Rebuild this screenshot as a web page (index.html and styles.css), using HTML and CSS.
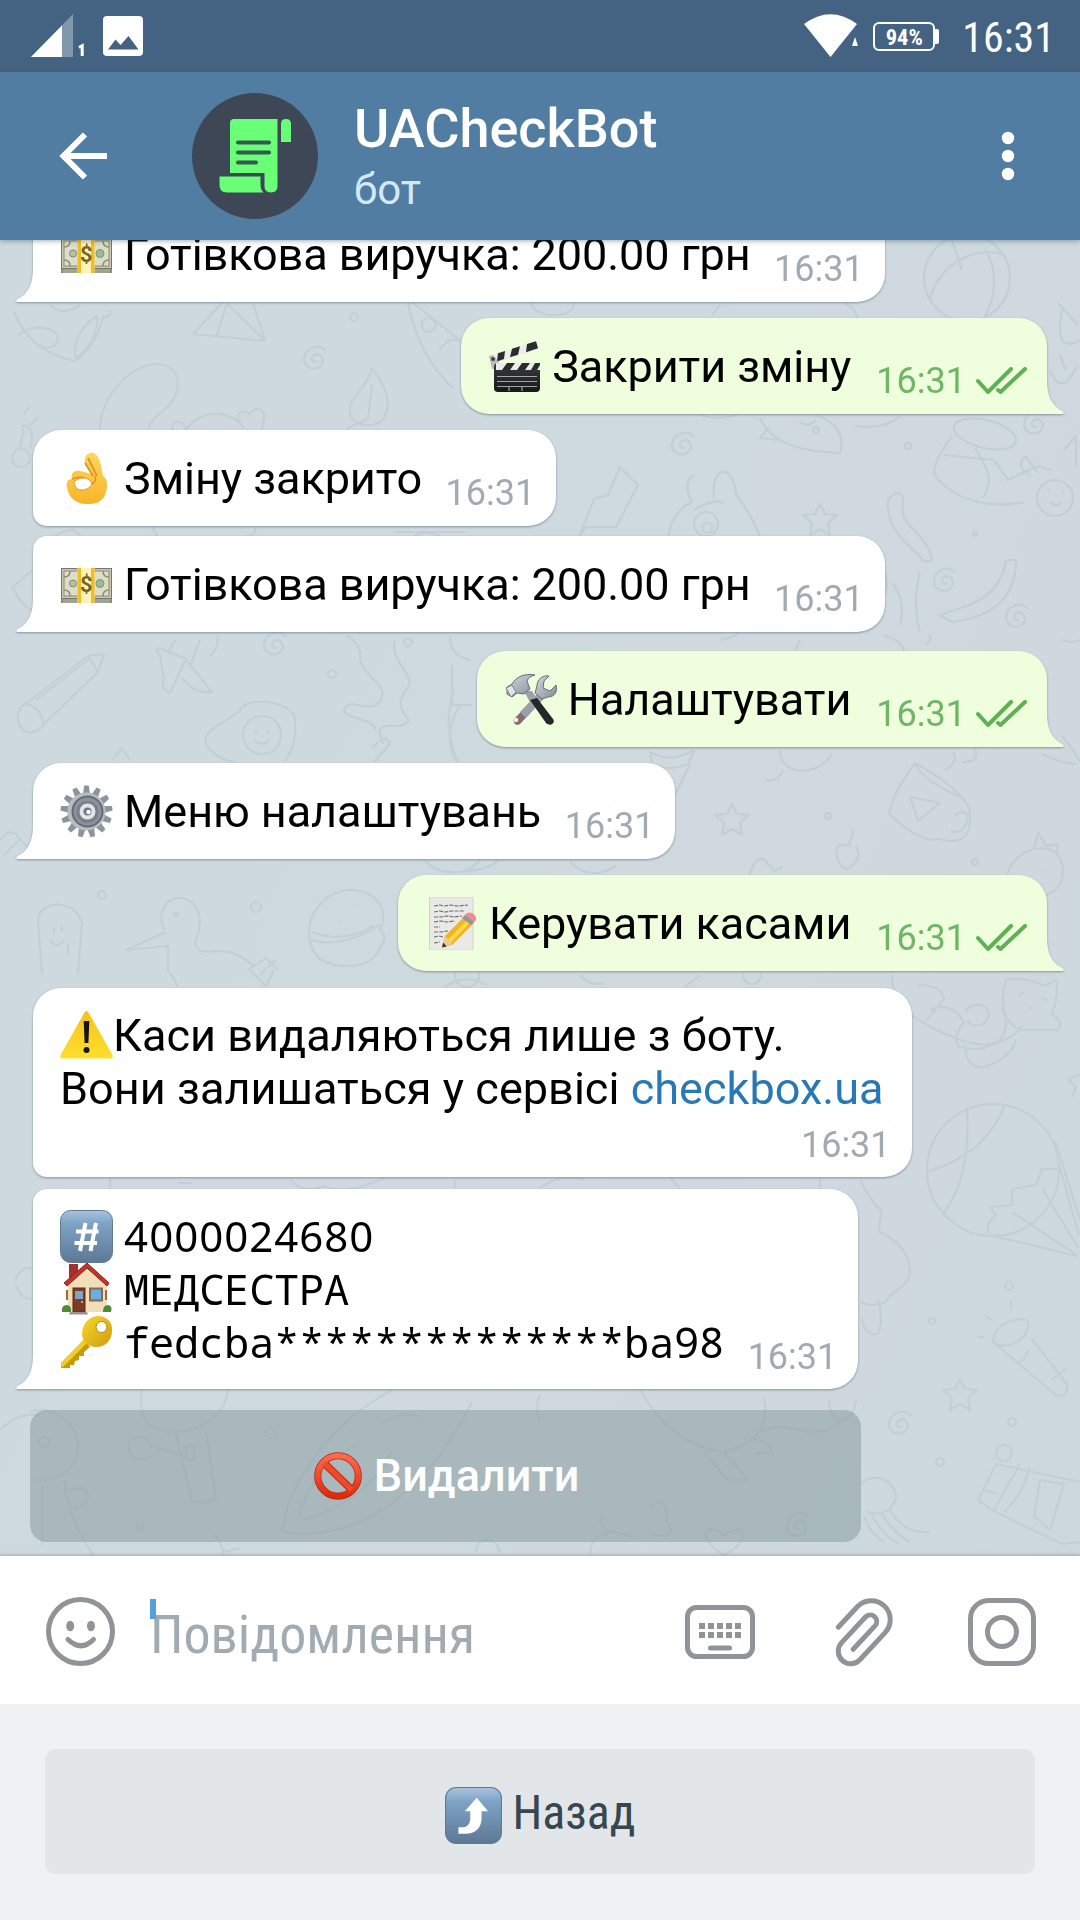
FILE: index.html
```html
<!DOCTYPE html>
<html lang="uk">
<head>
<meta charset="utf-8">
<title>UACheckBot</title>
<link rel="stylesheet" href="styles.css">
</head>
<body>
<svg class="defs" width="0" height="0" aria-hidden="true">
  <defs>
    <linearGradient id="g-key" x1="0" y1="0" x2="0" y2="1"><stop offset="0" stop-color="#a9c4dc"/><stop offset=".25" stop-color="#7ea3c6"/><stop offset="1" stop-color="#5d7894"/></linearGradient>
    <linearGradient id="g-warn" x1="0" y1="0" x2="0" y2="1"><stop offset="0" stop-color="#f5c21c"/><stop offset="1" stop-color="#ffdf2c"/></linearGradient>
    <linearGradient id="g-hand" x1="0" y1="0" x2="0" y2="1"><stop offset="0" stop-color="#ffd75a"/><stop offset="1" stop-color="#f8b42a"/></linearGradient>
    <linearGradient id="g-gold" x1="0" y1="0" x2="1" y2="1"><stop offset="0" stop-color="#f7d92b"/><stop offset="1" stop-color="#cf9a10"/></linearGradient>
    <linearGradient id="g-red" x1="0" y1="0" x2="0" y2="1"><stop offset="0" stop-color="#ff6a4d"/><stop offset="1" stop-color="#dd2a0c"/></linearGradient>
    <linearGradient id="g-steel" x1="0" y1="0" x2="1" y2="1"><stop offset="0" stop-color="#d5dae0"/><stop offset="1" stop-color="#848b94"/></linearGradient>
    <linearGradient id="g-black" x1="0" y1="0" x2="0" y2="1"><stop offset="0" stop-color="#3a3c42"/><stop offset="1" stop-color="#17181b"/></linearGradient>
    <symbol id="e-money" viewBox="0 0 53 53">
      <rect x="1" y="12" width="51" height="33" fill="#8f8c7c"/>
      <rect x="1.500" y="10.500" width="50" height="30" fill="#c9c8b0" stroke="#77766a"/>
      <rect x="4" y="13" width="45" height="25" fill="#deddc8" stroke="#8b8a78"/>
      <path d="M4 19q6 0 6-6M4 32q6 0 6 6M49 19q-6 0-6-6M49 32q-6 0-6 6" fill="none" stroke="#8b8a78" stroke-width="1.500"/>
      <circle cx="13" cy="25.500" r="3.500" fill="#bdbda6" stroke="#7b8a72"/><circle cx="40" cy="25.500" r="4" fill="#9dba94" stroke="#6f9a76"/>
      <path d="M3 42h47M3 44h47" stroke="#bab7a5"/>
      <rect x="17.500" y="10" width="17" height="35" fill="#fff2b8"/>
      <path d="M17.500 10h3.500v35h-3.500zM31 10h3.500v35H31z" fill="#eebd2a"/>
      <text x="26.200" y="34" text-anchor="middle" class="dollar">$</text>
    </symbol>
    <symbol id="e-clap" viewBox="0 0 53 53">
      <path d="M1 16 49 1l2 8L4 24z" fill="#ececec"/>
      <path d="M10 13.200 17 11l-1 8-7 2.500zM24 8.800l8-2.500-2 8.500-8 2.500zM39 4.100l9-2.800 2 7-12 4z" fill="#2a2b2e"/>
      <path d="M1 16l4-1 11 14H4z" fill="#b9bbc0"/><circle cx="5" cy="19" r="2" fill="#444"/>
      <rect x="6" y="23" width="46" height="29" rx="4" fill="url(#g-black)"/>
      <path d="M8 23h44v7H8z" fill="#ececec"/>
      <path d="M19 23h8l-5 7h-8zM34 23h8l-5 7h-8zM47 23h5v2l-3 5h-6z" fill="#2a2b2e"/>
      <path d="M9 36.500h40M9 41.500h40M9 46.500h40M21 47v4M34 47v4" stroke="#a3a4a6" stroke-width="1.200"/>
    </symbol>
    <symbol id="e-ok" viewBox="0 0 53 53">
      <path d="M30 1c-5 2-6 6-5 10l6 11c-5-1-10-4-15-3-4 1-5 4-4 8-5 0-6 4-5 9 2 10 9 16 20 16 11 1 18-5 19-13 2-4 1-9 0-12l-3-3C41 14 40 4 34 1q-2-1-4 0z" fill="url(#g-hand)"/>
      <path d="M28 6l9 18M25 11l8 13" fill="none" stroke="#dd9420" stroke-width="1.800"/>
      <path d="M14 29c4-1 6-4 10-3 4 0 7 3 8 6-2 4-6 6-11 6-4 0-7-4-7-9z" fill="#fff" stroke="#e2991e"/>
      <path d="M12 27q8-3 12-1M32 32q5-3 3-8" fill="none" stroke="#dd9420" stroke-width="1.400"/>
    </symbol>
    <symbol id="e-tools" viewBox="0 0 53 53">
      <path d="M36 19l6 4-25 27c-3 4-9 1-7-4z" fill="#8b6a70"/><path d="M36 18l6 5-20 22-6-6z" fill="#98a0a9"/><circle cx="12" cy="47" r="2.300" fill="#eff5df"/>
      <path d="M45 3c-6-1-12 3-12 10l-2 7 7 6 6-2c7 0 10-6 8-12l-6 6-7-3 1-7z" fill="url(#g-steel)" stroke="#656d77"/>
      <path d="M20 18l8 0 8 12-7 5z" fill="#9ba2ac"/>
      <path d="M26 27l7-2 16 21c3 4-3 8-7 4z" fill="#25272b"/>
      <path d="M3 14 8 11C12 4 20 0 31 2c-4 1-7 3-8 6l3 8-6 5-7-1-5 4-5-3z" fill="url(#g-steel)" stroke="#656d77"/>
      <path d="M2 15l6-3 4 7-5 5z" fill="#dfe3e8" stroke="#7d848e"/>
    </symbol>
    <symbol id="e-gear" viewBox="0 0 53 53">
      <g fill="#8d949c">
        <path id="tooth" d="M23 9l1.200-8.500h4.600L30 9z"/>
        <use href="#tooth" transform="rotate(27.700 26.500 26.500)"/><use href="#tooth" transform="rotate(55.400 26.500 26.500)"/><use href="#tooth" transform="rotate(83 26.500 26.500)"/><use href="#tooth" transform="rotate(110.800 26.500 26.500)"/><use href="#tooth" transform="rotate(138.500 26.500 26.500)"/><use href="#tooth" transform="rotate(166 26.500 26.500)"/><use href="#tooth" transform="rotate(194 26.500 26.500)"/><use href="#tooth" transform="rotate(221.500 26.500 26.500)"/><use href="#tooth" transform="rotate(249 26.500 26.500)"/><use href="#tooth" transform="rotate(277 26.500 26.500)"/><use href="#tooth" transform="rotate(304.600 26.500 26.500)"/><use href="#tooth" transform="rotate(332.300 26.500 26.500)"/>
      </g>
      <circle cx="26.500" cy="26.500" r="19" fill="#b6bdc5"/>
      <circle cx="27.500" cy="26.500" r="15" fill="#8b929a" stroke="#646b74" stroke-width="2"/>
      <circle cx="27.500" cy="27" r="11" fill="#7a7f87"/>
      <circle cx="27.500" cy="26.500" r="8" fill="#e2e5e9"/>
      <circle cx="27.500" cy="26.500" r="4" fill="#70777f"/><circle cx="28.500" cy="27" r="2.300" fill="#fff"/>
    </symbol>
    <symbol id="e-memo" viewBox="0 0 53 53">
      <path d="M4.500 0H48v53H4.500z" fill="#e9e9e6" stroke="#d2d2ce"/>
      <path d="M9 9l6-1 4 1 6-1 8 1 10-1M9 15l5-1 6 1 7-1 12 0M9 20l6 0 8-1 6 1 8-1M9 25l7-1 5 1 9-1M9 30h6M9 35l6 0 8-1M9 40l5-1 4 1M9 46l6-1" fill="none" stroke="#6e7073" stroke-width="1.200" stroke-dasharray="4 1.200"/>
      <path d="M17 50l3-11 20-20 9 7-22 22z" fill="#f3b51d"/>
      <path d="M23 43l20-21 3 2.500-20 21z" fill="#ffd84e"/>
      <path d="M17 50l3-11 7 8z" fill="#ecca96"/><path d="M17 50.500l1.200-5 3.500 4z" fill="#333"/>
      <path d="M37 21l4-4 9 7-4 4z" fill="#8f979e"/><path d="M40 18l2-2c4-2 10 2 9 7l-2 2z" fill="#f08b91"/>
    </symbol>
    <symbol id="e-warn" viewBox="0 0 53 53">
      <path d="M24.500 3.500q2-3 4 0l24 42.500q1 3-2 3.500h-48q-3-.5-2-3.500z" fill="url(#g-warn)"/>
      <path d="M23.700 12h5.600l-.9 22h-3.800z" fill="#15130b"/><circle cx="26.500" cy="41" r="3" fill="#15130b"/>
    </symbol>
    <symbol id="e-hash" viewBox="0 0 53 53">
      <rect x=".5" y=".5" width="52" height="52" rx="10" fill="url(#g-key)" stroke="#607a94"/>
      <path d="M25.500 13l-5.500 28M36 13l-5.500 28M16 21.500h22.500M14.500 33h22.500" stroke="#fff" stroke-width="4" fill="none"/>
    </symbol>
    <symbol id="e-house" viewBox="0 0 53 53">
      <path d="M9 1h9v16H9z" fill="#a4322c"/>
      <path d="M8 21 27 3l20 18v28H8z" fill="#f0dfb9"/>
      <path d="M4 20 27 0l22 20-2 3L27 5 7 23z" fill="#c2332c" stroke="#8e2621"/>
      <rect x="13" y="25" width="12" height="24" fill="#7c3b25" stroke="#5d2a18"/><rect x="15" y="28" width="8" height="8" fill="#7aa7c8"/><circle cx="22" cy="39" r="1" fill="#f3cf65"/>
      <rect x="30" y="25.500" width="12" height="12" fill="#67aee6" stroke="#8c6a45" stroke-width="2"/>
      <path d="M10 49h17l1 2.500H9z" fill="#9a938b"/>
      <path d="M2 49q-1-7 5-7 5 1 4 7zM43 49q0-7 5-7 5 1 3 7z" fill="#4f8a35"/>
      <path d="M7 27v10M46 27v10" stroke="#a5683d" stroke-width="2"/>
    </symbol>
    <symbol id="e-key" viewBox="0 0 53 53">
      <path d="M24 24l6 7-6 5 0 4-5 0 0 4-4 1-1 4-4 0v3H1v-5z" fill="#c8980f"/>
      <path d="M24 23l3 4L3 51H1v-4z" fill="#efcd2b"/>
      <path d="M37 0C47 0 53 6 52 16c-1 9-7 15-16 15-8 0-14-6-14-13C22 9 28 1 37 0z" fill="url(#g-gold)"/>
      <circle cx="41.500" cy="11" r="5.500" fill="#fff" stroke="#b8890c"/>
    </symbol>
    <symbol id="e-no" viewBox="0 0 53 53">
      <path d="M12 13l29 28" stroke="#c1260b" stroke-width="8"/>
      <circle cx="26.500" cy="26.500" r="21.500" fill="none" stroke="#b9230b" stroke-width="7.500"/>
      <circle cx="26.500" cy="26.500" r="21.500" fill="none" stroke="url(#g-red)" stroke-width="6"/>
      <path d="M12 13l29 28" stroke="#ee4a2a" stroke-width="6"/>
    </symbol>
    <symbol id="e-up" viewBox="0 0 53 53">
      <rect x=".5" y=".5" width="52" height="52" rx="10" fill="url(#g-key)" stroke="#607a94"/>
      <path d="M12.500 37.500h3c6 0 8-4 8-9v-6h-5L29.500 10 40 22.500h-6V29c0 9-6 14.500-15 14.500h-6.500z" fill="#fff"/>
    </symbol>
    <symbol id="tail" viewBox="0 0 18 34"><path d="M18 0h-1C17 17 12 26 1 31.500Q-1 34 2 34h16z"/></symbol>
    <symbol id="checks" viewBox="0 0 51 27"><path d="M2 14l10 11L35 2M22 23l2.500 2L49 2" fill="none" stroke="#5fb254" stroke-width="4" stroke-linecap="round" stroke-linejoin="round"/></symbol>
    <path id="star" d="M0-16l5 10 12 1-9 8 2 12-10-6-10 6 2-12-9-8 12-1z"/>
    <path id="spiral" d="M2 1c-3 3-7-1-4-5 5-5 12 1 9 8-5 8-18 5-18-5 1-12 15-16 22-8"/>
  </defs>
</svg>

<div class="phone">
  <div class="status">
    <svg class="status-left" width="150" height="72" viewBox="0 0 150 72">
      <path d="M73 14v43H31z" fill="#8197ac"/><path d="M62 25.500V57H31z" fill="#fff"/>
      <path d="M79 47.500l3.200-1.800V56" fill="none" stroke="#fff" stroke-width="3"/>
      <rect x="103" y="16" width="40" height="40" rx="4" fill="#fff"/>
      <path d="M108 49.500l7.500-10 5 5.500 8-9 10 13.500z" fill="#446282"/>
    </svg>
    <div class="status-right">
      <svg width="56" height="72" viewBox="0 0 56 72"><path d="M0 24Q26.500 4.500 53 24L26.500 57z" fill="#fff"/><path d="M51 37l3 9h-6z" fill="#fff"/></svg>
      <div class="battery">94%</div>
      <div class="clock">16:31</div>
    </div>
  </div>

  <header class="header">
    <svg class="back" width="50" height="48" viewBox="0 0 50 48"><path d="M48 24H5M26 2.500 4.500 24 26 45.500" fill="none" stroke="#fff" stroke-width="6"/></svg>
    <svg class="avatar" width="126" height="126" viewBox="0 0 126 126">
      <circle cx="63" cy="63" r="63" fill="#3e4756"/>
      <path d="M42 26h43.500v67q0 6.500-6.500 6.500t-6.500-6.500V80H38V30q0-4 4-4z" fill="#69ff76"/>
      <path d="M89 31q0-5 5-5t5 5v18H89zM27.500 83.500h41V91q0 6 3 8.500H35q-7.500 0-7.500-7.500z" fill="#69ff76"/>
      <path d="M46 49.500h31M46 59.500h31M46 69.500h18" stroke="#35584f" stroke-width="4" stroke-linecap="round"/>
    </svg>
    <div class="peer">
      <div class="peer-name">UACheckBot</div>
      <div class="peer-status">бот</div>
    </div>
    <svg class="more" width="14" height="52" viewBox="0 0 14 52"><g fill="#fff"><circle cx="7" cy="8" r="6.200"/><circle cx="7" cy="26" r="6.200"/><circle cx="7" cy="44" r="6.200"/></g></svg>
  </header>

  <main class="chat">
    <svg class="wallpaper" viewBox="0 240 1080 1316" aria-hidden="true">
      <g>
        <path d="M14 312Q30 352 75 361 98 345 103 315M75 358c-2-18 8-34 22-42 2 16-8 34-22 42M18 335c15-12 40-8 40 4-2 10-14 10-18 6M50 305q12 12 30 0M103 318q10-2 6-8"/>
        <path d="M193 334l30-32M193 334l72 7-38-38-10 32M265 341l-12-38"/>
        <use href="#spiral" x="315" y="360"/><circle cx="354" cy="317" r="4"/>
        <path d="M408 303c6 30 20 62 45 85M412 302l50 40M428 318a7 7 0 1 0 1 0M440 350q6-12 20-10"/>
        <path d="M100 430c0-32 28-65 58-66 25 2 26 30 6 46-10 8-14 12-16 18"/>
        <path d="M172 430c0-12 12-10 14 0 12-20 44-22 58-2M240 422c-6-8 2-14 10-8 4-8 16-6 14 4l-2 12"/>
        <path d="M372 368c10 14 22 32 12 50-10 12-30 8-34-4-4-16 16-22 22-46M372 385l-4 34-22 10"/>
        <path d="M20 450c0-14 6-14 2-24 10-2 12 10 8 22M30 425l8-8M24 414l6-8"/><circle cx="21" cy="458" r="9"/>
        <path d="M10 590l22-20M12 585q8 20 20 25M55 536q20-12 25 0M152 527q10 14 0 18M395 532h70M410 540q10-12 30-4M245 536q12 0 10-8"/>
        <circle cx="967" cy="278" r="43"/><path d="M930 300c10-40 50-55 75-45M985 250c14 20 10 50 0 66M952 240l10 30"/>
        <path d="M1058 303l20 22M1062 310q-4 20 0 30 8 8 18 0M1050 370q8 20 18 10l10-14M1060 355l6 15"/>
        <path d="M532 303c0 16 44 16 42 0M720 305l-8 10M845 303q20 12 8 30"/>
        <path d="M698 414q20 8 40 0M760 418c10 24 40 34 80 35 6-20-8-34-26-38M768 428l-8 10 18 2M800 422q8 6 16-2"/><circle cx="816" cy="430" r="3"/>
        <use href="#spiral" x="683" y="446"/><circle cx="908" cy="446" r="3"/>
        <path d="M855 426q30 4 45-10M620 467l18 18-22 42-30 0-6 8 14-36 14-4z"/>
        <path d="M668 540c2-20 10-32 24-38-8-14-4-26 2-26M714 498c-4-34 20-34 22-4 10 14 20 30 24 44M694 510q24-14 30-6"/><circle cx="706" cy="524" r="12"/><circle cx="707" cy="528" r="5"/>
        <use href="#star" x="820" y="520"/><circle cx="975" cy="534" r="2"/>
        <path d="M888 500c10-14 18-6 14 10 2 18 26 26 30 50q-10 4-12-4c-18-16-34-30-32-56"/>
        <path d="M940 615c30-10 60-16 66-55h10c0 34-18 56-64 62zM880 600c10-10 10-28-4-36M920 632q-8-30 0-60M900 625q6-26-8-42"/>
        <use href="#spiral" x="1017" y="618"/><use href="#spiral" x="945" y="582"/><use href="#spiral" x="1035" y="425"/>
        <ellipse cx="985" cy="434" rx="32" ry="14" transform="rotate(14 985 434)"/><path d="M952 436c-10 14-18 26-18 38 16 24 54 36 90 28M944 455l50 5 14 20 30-14 14 4M975 448c12 20 20 30 8 50"/><circle cx="1055" cy="498" r="18"/><path d="M1030 475c-10-4-12-16-4-18l12 16M1064 450l12-14v30M1048 490h2M1062 492h2M1050 502q6 6 12 0"/>
      </g>
      <g>
        <path d="M20 708L88 656l16-2-6 18-60 58c-12 8-26-6-18-22zM88 656l10 16M26 704q16 4 18 22M36 700l54-42"/>
        <path d="M160 655q-8-8 2-6l24 10-16 34q-10-4-6-14zM186 660l26 32q-18 2-30-14M176 640q-8 8-6 14M200 640l-10 26M218 636q0 14-8 20"/>
        <use href="#spiral" x="275" y="646"/><circle cx="332" cy="674" r="4"/><circle cx="408" cy="642" r="4"/>
        <path d="M206 745c-4-14 14-20 34-34 2-14 44-12 54 4 4 18-2 40-10 46M206 745q10 14 30 18"/><circle cx="262" cy="735" r="19"/><path d="M256 730v3M268 730v3M254 740q8 8 16 0"/>
        <path d="M346 636q16 6 14 24c6 20 30 24 20 42-12 12-32-6-36 8 2 10 26 6 32 20M395 640c-6 20 18 32 14 46-8 10-14 20 0 34-6 12-24 0-30 10l4 14M372 748q14-16 18-4l-16 18"/>
        <path d="M450 636c0 14 8 22 20 24M452 665v40h20M460 705q-18 30-4 56M454 690q-12 36 4 72"/>
        <path d="M112 760l10-12 8 12M0 840q12-16 20 0l14 12M4 855l14-14"/>
        <path d="M38 920c2-22 40-20 44 4l-4 50M38 920l4 54M54 928v6M62 926v6M50 940q6 10 14 0M68 944v10"/><circle cx="102" cy="895" r="4"/><circle cx="256" cy="907" r="5"/>
        <path d="M164 930c-8-20 4-34 18-32 18 4 20 20 16 36-4 10-4 16 8 18 30-4 40 8 48 14M166 932l-40 18 42-4v26M248 970l18-12 12 12M260 975l16-16"/><circle cx="176" cy="914" r="2"/>
        <path d="M310 940c-6-26 18-52 44-50 28 4 34 24 26 40q8 8 2 14c-4 12-14 22-34 22-24 0-36-10-38-26 20 6 50 0 70-16M312 932q30 12 62-6"/><path d="M325 908h1M340 922h1M355 905h1"/>
        <path d="M425 860q10 14 35 12 30-2 38-12M570 862q20 20 46 4M480 860q-10 10-18 12"/>
        <path d="M650 752q20 12 44-2l-6 14q-18 8-36 0zM654 770l10 25 12-2 14-28M780 750c0 28 40 26 52 4M765 780q14 2 18-10M720 640q20-4 16-8"/>
        <path d="M800 640l-8 16M884 636q20 4 20 18M925 645q10-8 2-10M1062 736c10 10 20 30 24 34M1042 754q20 10 34 10M1062 640q10 4 18 0"/>
        <use href="#star" x="732" y="820"/><circle cx="828" cy="816" r="3"/><circle cx="975" cy="862" r="3"/>
        <path d="M915 763q38 20 54 44c4 24-2 34-18 34l-14-2c-10 4-34-10-48-26 4-20 18-38 26-50M915 763q6 18 50 36M955 815q14-8 12 6-4 14-16 10M910 797l30 6-22 18zM945 770q14-8 8-18M962 762q20 0 12-14"/>
        <path d="M1008 872c-6 14 6 22 22 26 26 0 36-16 32-34-4-24-44-20-54 8M1034 848l4-16 8 14 12-2-2 12M1020 870h1M1032 882h1M1045 870h1M1040 892h1"/>
        <path d="M838 860q-6-20 10-14 6-12 4-16M838 860q6 14 14 6 10-8 4-20M750 875q4-18 14-16l10 12 8-4"/>
      </g>
      <g>
        <path d="M170 972l8 15M250 970l16 16 8-16M445 987q20-14 42-2M580 975q10 12 24 8M700 975l-15 12"/><circle cx="467" cy="975" r="12"/><circle cx="752" cy="975" r="9"/>
        <path d="M892 975c0 20 10 28 22 42 20 12 44 26 72 28 16-4 28-6 36-20M918 985q24 0 26 14l-18 22M930 1010q20-10 34 12-12 16-6 24 20 8 40-4 14-16 4-34M965 1012c10-12 24-8 24 4-4 12-18 12-22 4M966 1045c-2 12 4 24 18 22 14-4 30-14 32-28"/>
        <path d="M1006 980c-8 24 0 46 16 50l36 0c6-8-2-12-6-16 4-10 6-22 4-34l-12 6q-20-10-38-6M1018 996l6-4M1042 998l6 2M1028 1008h4"/>
        <circle cx="993" cy="1170" r="66"/><path d="M967 1110q4 70-25 105M1005 1105q-20 50-76 66M990 1235q-6-12 6-20l-6-8 22-2v-16l24-4 6-16h16M993 1236l84 20M1055 1140l25 80M1012 1212l66 44M1042 1188l36 60M1059 1165l20 70"/>
        <path d="M860 1180q10 20 22 32-4 12-2 20 30 14 30 42c-6 18-20 16-24 28-8 4-16 4-26 0M862 1318q2 18 16 16 6-12 0-34"/>
        <path d="M993 1342c0-16 20-26 34-22 6 14-16 34-34 22zM993 1342l64 54q12 0 10-12l-36-46M1028 1350q-4 14-12 12M1052 1380l14-12M1011 1300v10M985 1315l6 5M978 1337h6"/>
        <circle cx="1009" cy="1286" r="4"/><circle cx="932" cy="1321" r="3"/><use href="#star" x="960" y="1395"/><path d="M1080 1075l-12 4 8 8-4 10"/>
        <path d="M15 1282q4-16 18-14M16 1285q4 14 16 14M110 1177v12M178 1183h14M290 1180q14 14 34 6 22 10 60-8M455 1180v8M540 1188q20-16 45-8M670 1177l10 12M820 1177v12"/>
        <path d="M0 1430q20-20 40-14M30 1412c20-8 48 10 48 34 0 22-18 36-42 34M42 1485v60M64 1480q4 40 30 76M70 1490q18-6 18 8-4 12-14 10"/><circle cx="44" cy="1442" r="5"/>
        <path d="M142 1390c-4 30 6 42 34 42 30-2 50-20 52-42M130 1440c10-8 20 0 20 6l28 8M130 1440c-6 16 10 26 20 16M176 1434l16 66q12 6 24-2l-10-66M186 1446h8v14h-8z"/><circle cx="271" cy="1433" r="5"/><circle cx="140" cy="1527" r="3"/>
        <path d="M282 1532c6-50 50-110 110-142M282 1532c70 10 140-30 190-130M298 1518c10-36 40-70 60-72M392 1450c-10 30-50 60-90 70M380 1425q20-16 40-8"/>
        <path d="M640 1390c20 36 50 58 84 62l24 28-20 0-24-28M724 1452c40-10 44-34 40-54M750 1438q22 4 22 14l-18 2M760 1432c14-8 30-4 40-2 20 6 30 0 44-12M829 1400c0 24 24 28 27 0"/>
        <use href="#spiral" x="900" y="1425"/><circle cx="1004" cy="1453" r="8"/><circle cx="940" cy="1462" r="4"/><circle cx="1012" cy="1422" r="4"/>
        <path d="M860 1485c14-16 38-2 36 14l-6 10q-14 8-24 2M890 1510q14 24 40 22M880 1512q14 22 30 30M872 1515q10 20 26 28M864 1516q6 18 20 26"/>
        <path d="M978 1500l18-36 84 18M978 1500l14 10 70 34 18-2M1020 1464l-26 46M1030 1466q-8 30-26 46M1040 1480l-6 36 16 14 14-46zM985 1490l12 4"/>
        <path d="M724 1555c-30-18-18-34 0-20 20-14 30 4 0 20M590 1555q0-20 20-24l24 6M602 1516c-8 10 10 10 4 20M650 1510c8-16 20-4 16 10 10 10 4 20-14 14"/><use href="#spiral" x="798" y="1527"/>
        <path d="M215 1535q10 14 8 20M225 1552l14-4M476 1552c0-16 20-16 24 0M540 1395q-6 14 0 24"/>
      </g>
    </svg>

    <div class="msg in last">
      <svg class="tail"><use href="#tail"/></svg>
      <div class="text"><svg class="emoji"><use href="#e-money"/></svg> Готівкова виручка: 200.00 грн</div>
      <div class="time">16:31</div>
    </div>

    <div class="msg out">
      <svg class="tail"><use href="#tail"/></svg>
      <div class="text"><svg class="emoji"><use href="#e-clap"/></svg> Закрити зміну</div>
      <div class="time">16:31<svg class="checks"><use href="#checks"/></svg></div>
    </div>

    <div class="msg in first">
      <div class="text"><svg class="emoji"><use href="#e-ok"/></svg> Зміну закрито</div>
      <div class="time">16:31</div>
    </div>
    <div class="msg in last joined">
      <svg class="tail"><use href="#tail"/></svg>
      <div class="text"><svg class="emoji"><use href="#e-money"/></svg> Готівкова виручка: 200.00 грн</div>
      <div class="time">16:31</div>
    </div>

    <div class="msg out spaced">
      <svg class="tail"><use href="#tail"/></svg>
      <div class="text"><svg class="emoji"><use href="#e-tools"/></svg> Налаштувати</div>
      <div class="time">16:31<svg class="checks"><use href="#checks"/></svg></div>
    </div>

    <div class="msg in">
      <svg class="tail"><use href="#tail"/></svg>
      <div class="text"><svg class="emoji"><use href="#e-gear"/></svg> Меню налаштувань</div>
      <div class="time">16:31</div>
    </div>

    <div class="msg out">
      <svg class="tail"><use href="#tail"/></svg>
      <div class="text"><svg class="emoji"><use href="#e-memo"/></svg> Керувати касами</div>
      <div class="time">16:31<svg class="checks"><use href="#checks"/></svg></div>
    </div>

    <div class="msg in first stacked">
      <div class="text"><svg class="emoji"><use href="#e-warn"/></svg>Каси видаляються лише з боту.<br>Вони залишаться у сервісі <a class="link">checkbox.ua</a></div>
      <div class="time">16:31</div>
    </div>
    <div class="msg in last joined card">
      <svg class="tail"><use href="#tail"/></svg>
      <div class="text"><svg class="emoji"><use href="#e-hash"/></svg> <span class="digits">4000024680</span><br><svg class="emoji"><use href="#e-house"/></svg> <span class="mono">МЕДСЕСТРА</span><br><svg class="emoji"><use href="#e-key"/></svg> <span class="mono">fedcba**************ba98</span></div>
      <div class="time">16:31</div>
    </div>

    <div class="inline-button"><svg class="emoji"><use href="#e-no"/></svg> Видалити</div>
  </main>

  <div class="composer">
    <svg class="smile" width="70" height="70" viewBox="0 0 70 70">
      <circle cx="34.500" cy="34.500" r="32" fill="none" stroke="#8e9498" stroke-width="5"/>
      <ellipse cx="24.200" cy="29" rx="4" ry="5.200" fill="#8e9498"/><ellipse cx="45" cy="29" rx="4" ry="5.200" fill="#8e9498"/>
      <path d="M22 42.500q13 12.500 25.500 0" fill="none" stroke="#8e9498" stroke-width="5" stroke-linecap="round"/>
    </svg>
    <div class="input"><span class="caret"></span>Повідомлення</div>
    <svg width="70" height="56" viewBox="0 0 70 56">
      <rect x="2.500" y="3.500" width="65" height="49" rx="9" fill="none" stroke="#8e9498" stroke-width="5"/>
      <path d="M14 22h44M14 31h44" stroke="#8e9498" stroke-width="6" stroke-dasharray="6 3"/>
      <path d="M25.500 44h19" stroke="#8e9498" stroke-width="5" stroke-linecap="round"/>
    </svg>
    <svg class="clip" width="60" height="70" viewBox="0 0 60 70">
      <path transform="translate(36.500 22) rotate(43)" d="M-18 28V0a19 19 0 0 1 38 0V37a12.500 12.500 0 0 1-25 0V2a6.500 6.500 0 0 1 13 0V34" fill="none" stroke="#8e9498" stroke-width="5" stroke-linecap="round"/>
    </svg>
    <svg width="70" height="70" viewBox="0 0 70 70">
      <rect x="3.500" y="3.500" width="63" height="63" rx="18" fill="none" stroke="#8e9498" stroke-width="5"/>
      <circle cx="35" cy="35" r="14.500" fill="none" stroke="#8e9498" stroke-width="5"/>
    </svg>
  </div>

  <div class="keyboard">
    <div class="key"><svg class="emoji"><use href="#e-up"/></svg> Назад</div>
  </div>
</div>
</body>
</html>
```
FILE: styles.css
```css
* { box-sizing: border-box; }

body {
  margin: 0;
  font-family: Roboto, sans-serif;
  background: #eff1f5;
}

.defs { position: absolute; }

.dollar { font: 700 22px Roboto, sans-serif; fill: #7a6420; }

.phone {
  width: 1080px;
  height: 1920px;
  display: flex;
  flex-direction: column;
  overflow: hidden;
}

/* Status bar */
.status {
  height: 72px;
  flex: none;
  display: flex;
  justify-content: space-between;
  background: #446282;
  color: #fff;
  font-family: "Roboto Condensed", Roboto, sans-serif;
}

.status-right {
  display: flex;
  align-items: center;
  padding-right: 25px;
}

.status-right svg { margin-right: 13px; }

.battery {
  position: relative;
  width: 62px;
  height: 29px;
  border: 2px solid #fff;
  border-radius: 6px;
  font-size: 22.5px;
  font-weight: 700;
  line-height: 27px;
  text-align: center;
}

.battery::after {
  content: "";
  position: absolute;
  left: 60px;
  top: 5px;
  width: 4px;
  height: 15px;
  border-radius: 0 2px 2px 0;
  background: #fff;
}

.clock {
  margin-left: 27px;
  padding-top: 3px;
  font-size: 42px;
  line-height: 48px;
}

/* Header */
.header {
  position: relative;
  z-index: 2;
  height: 168px;
  flex: none;
  display: flex;
  align-items: center;
  padding: 0 65px 0 59px;
  background: #517da2;
  color: #fff;
  box-shadow: 0 1px 5px rgba(60, 70, 80, .45);
}

.avatar { margin-left: 83px; }

.peer { flex: 1; margin-left: 36px; }

.peer-name {
  font-size: 54px;
  font-weight: 500;
  line-height: 62px;
}

.peer-status {
  margin-top: 5px;
  font-size: 42px;
  line-height: 50px;
  color: #d3e8fa;
}

/* Conversation */
.chat {
  position: relative;
  height: 1316px;
  flex: none;
  display: flex;
  flex-direction: column;
  justify-content: flex-end;
  padding: 0 33px 14px;
  overflow: hidden;
  background: linear-gradient(115deg, #ced9df, #cfd9df 60%, #cdd8dd);
}

.wallpaper {
  position: absolute;
  left: 0;
  top: 0;
  width: 1080px;
  height: 1316px;
  fill: none;
  stroke: #c3cfd6;
  stroke-width: 2.2;
  stroke-linejoin: round;
}

.msg {
  position: relative;
  flex: none;
  display: flex;
  align-items: flex-end;
  align-self: flex-start;
  gap: 23.5px;
  margin-top: 16px;
  padding: 22px 21px 21px 27px;
  border-radius: 28px;
  background: #fff;
  color: #000;
  fill: #fff;
  filter: drop-shadow(0 1px 1px rgba(90, 112, 125, .65));
}

.in { border-bottom-left-radius: 0; }
.in.first { border-bottom-left-radius: 14px; }
.in.joined { margin-top: 10px; border-top-left-radius: 14px; }

.out {
  align-self: flex-end;
  gap: 25px;
  padding-right: 20px;
  border-bottom-right-radius: 0;
  background: #efffde;
  fill: #efffde;
}

.out.spaced { margin-top: 19px; }

.tail {
  position: absolute;
  left: -17px;
  bottom: 0;
  width: 18px;
  height: 34px;
}

.out .tail { left: auto; right: -17px; transform: scaleX(-1); }

.text {
  font-size: 45px;
  line-height: 53px;
  letter-spacing: -.06px;
  white-space: nowrap;
}

.emoji {
  display: inline-block;
  width: 53px;
  height: 53px;
  vertical-align: top;
}

.time {
  display: flex;
  align-items: center;
  margin-bottom: -9px;
  font-size: 36px;
  line-height: 42px;
  color: #a1aab3;
}

.out .time { color: #6fb566; }

.checks {
  width: 51px;
  height: 27px;
  margin: -1px 0 0 10px;
}

.msg.stacked {
  flex-direction: column;
  gap: 0;
  margin-top: 17px;
  padding: 21px 21px 20px 27px;
}

.stacked .text { padding-right: 7px; letter-spacing: .04px; }
.stacked .time { margin: 9px 0 -9px; }

.msg.card { margin-top: 12px; padding: 21px 21px 20px 27px; }

.link { color: #2678b6; }

.mono {
  font-family: "Noto Sans Mono", "DejaVu Sans Mono", monospace;
  font-size: 42px;
  line-height: 1;
  letter-spacing: -.2px;
}

.digits {
  font-family: "Noto Sans", "Open Sans", sans-serif;
  font-size: 42px;
  line-height: 1;
  letter-spacing: 1px;
}

.inline-button {
  position: relative;
  flex: none;
  width: 831px;
  height: 132px;
  margin: 21px 0 0 -3px;
  padding-left: 1px;
  border-radius: 17px;
  background: rgba(129, 152, 155, .5);
  color: #fff;
  font-size: 45px;
  font-weight: 500;
  line-height: 132px;
  text-align: center;
}

.inline-button .emoji {
  width: 50px;
  height: 50px;
  margin-top: 41px;
}

/* Message field */
.composer {
  position: relative;
  height: 148px;
  flex: none;
  display: flex;
  align-items: center;
  padding: 4px 43px 0 46px;
  background: #fff;
  box-shadow: 0 -1px 3px rgba(80, 95, 105, .4);
  clip-path: inset(-6px 0 0 0);
}

.input {
  position: relative;
  flex: 1;
  margin-left: 34px;
  padding-top: 6px;
  font: 54px/64px "Roboto Condensed", Roboto, sans-serif;
  color: #a2abb1;
}

.caret {
  position: absolute;
  left: 0;
  top: 2px;
  width: 6px;
  height: 20px;
  background: #52a1dd;
}

.clip { margin: 0 73px 0 79px; }

/* Reply keyboard */
.keyboard {
  flex: 1;
  padding: 45px;
  background: #eff1f5;
}

.key {
  height: 125px;
  border-radius: 11px;
  background: #e3e6e9;
  color: #36474f;
  font: 48px/127px "Roboto Condensed", Roboto, sans-serif;
  text-align: center;
}

.key .emoji {
  width: 57px;
  height: 57px;
  margin-top: 38px;
}
```
